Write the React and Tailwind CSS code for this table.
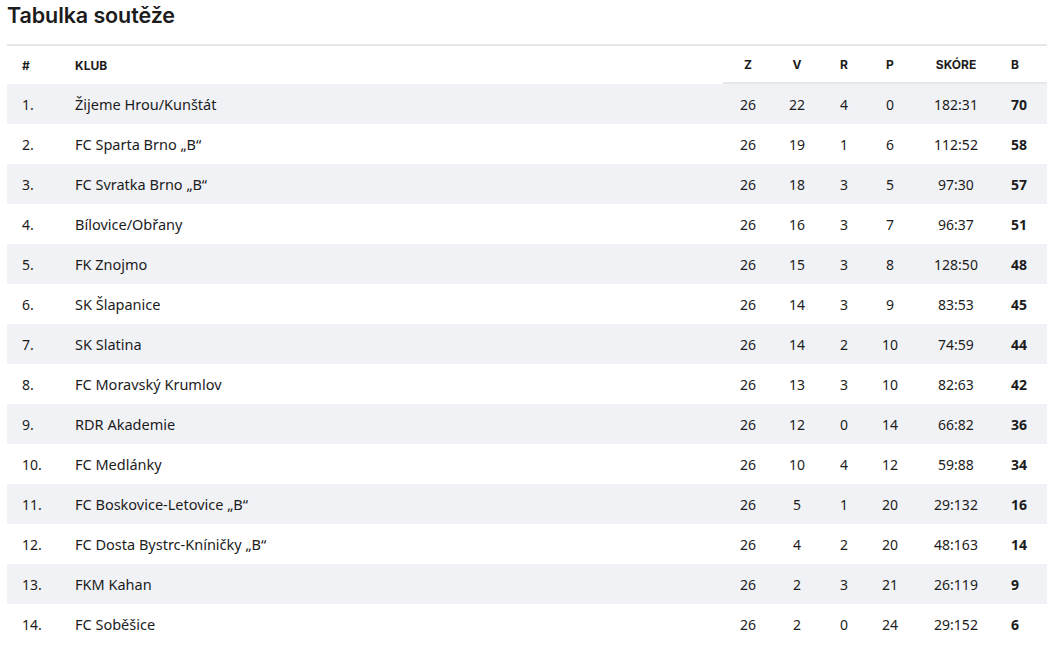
import React from 'react';

const rows = [
    ['1.', 'Žijeme Hrou/Kunštát', 26, 22, 4, 0, '182:31', 70],
    ['2.', 'FC Sparta Brno „B“', 26, 19, 1, 6, '112:52', 58],
    ['3.', 'FC Svratka Brno „B“', 26, 18, 3, 5, '97:30', 57],
    ['4.', 'Bílovice/Obřany', 26, 16, 3, 7, '96:37', 51],
    ['5.', 'FK Znojmo', 26, 15, 3, 8, '128:50', 48],
    ['6.', 'SK Šlapanice', 26, 14, 3, 9, '83:53', 45],
    ['7.', 'SK Slatina', 26, 14, 2, 10, '74:59', 44],
    ['8.', 'FC Moravský Krumlov', 26, 13, 3, 10, '82:63', 42],
    ['9.', 'RDR Akademie', 26, 12, 0, 14, '66:82', 36],
    ['10.', 'FC Medlánky', 26, 10, 4, 12, '59:88', 34],
    ['11.', 'FC Boskovice-Letovice „B“', 26, 5, 1, 20, '29:132', 16],
    ['12.', 'FC Dosta Bystrc-Kníničky „B“', 26, 4, 2, 20, '48:163', 14],
    ['13.', 'FKM Kahan', 26, 2, 3, 21, '26:119', 9],
    ['14.', 'FC Soběšice', 26, 2, 0, 24, '29:152', 6],
];

const grid = "grid grid-cols-[53px_663px_50px_48px_46px_46px_86px_48px] items-center";

const App = () => {
    return (
        <div className="bg-white w-[1063px] min-h-[651px] px-[7px] text-[#1c1c1c] font-['Noto_Sans',sans-serif]">
            <div className="h-[44px]">
                <h2 className="text-[21.5px] leading-[30px] font-semibold tracking-[-0.1px] font-['Inter',sans-serif]">Tabulka soutěže</h2>
            </div>
            <div className="w-[1040px]">
                {/* hlavicka */}
                <div className={`${grid} h-[40px] border-t-2 border-[#e6e7eb] text-[12px] font-bold font-['Inter',sans-serif]`}>
                    <div className="pl-[15px] pt-px">#</div>
                    <div className="pl-[15px] pt-px">KLUB</div>
                    <div className="col-span-6 grid grid-cols-[50px_48px_46px_46px_86px_48px] h-full items-center border-b-2 border-[#e6e7eb] pt-px">
                        <div className="text-center">Z</div>
                        <div className="text-center">V</div>
                        <div className="text-center">R</div>
                        <div className="text-center">P</div>
                        <div className="text-center">SKÓRE</div>
                        <div className="pl-3">B</div>
                    </div>
                </div>
                {rows.map((r, i) => (
                    <div key={r[0]} className={`${grid} h-[40px] pt-px text-[14px] ${i % 2 === 0 ? 'bg-[#f1f2f6]' : 'bg-white'}`}>
                        <div className="pl-[15px]">{r[0]}</div>
                        <div className="pl-[15px] text-[14.5px]">{r[1]}</div>
                        <div className="text-center">{r[2]}</div>
                        <div className="text-center">{r[3]}</div>
                        <div className="text-center">{r[4]}</div>
                        <div className="text-center">{r[5]}</div>
                        <div className="text-center">{r[6]}</div>
                        <div className="pl-3 font-bold">{r[7]}</div>
                    </div>
                ))}
            </div>
        </div>
    );
};

export default App;
